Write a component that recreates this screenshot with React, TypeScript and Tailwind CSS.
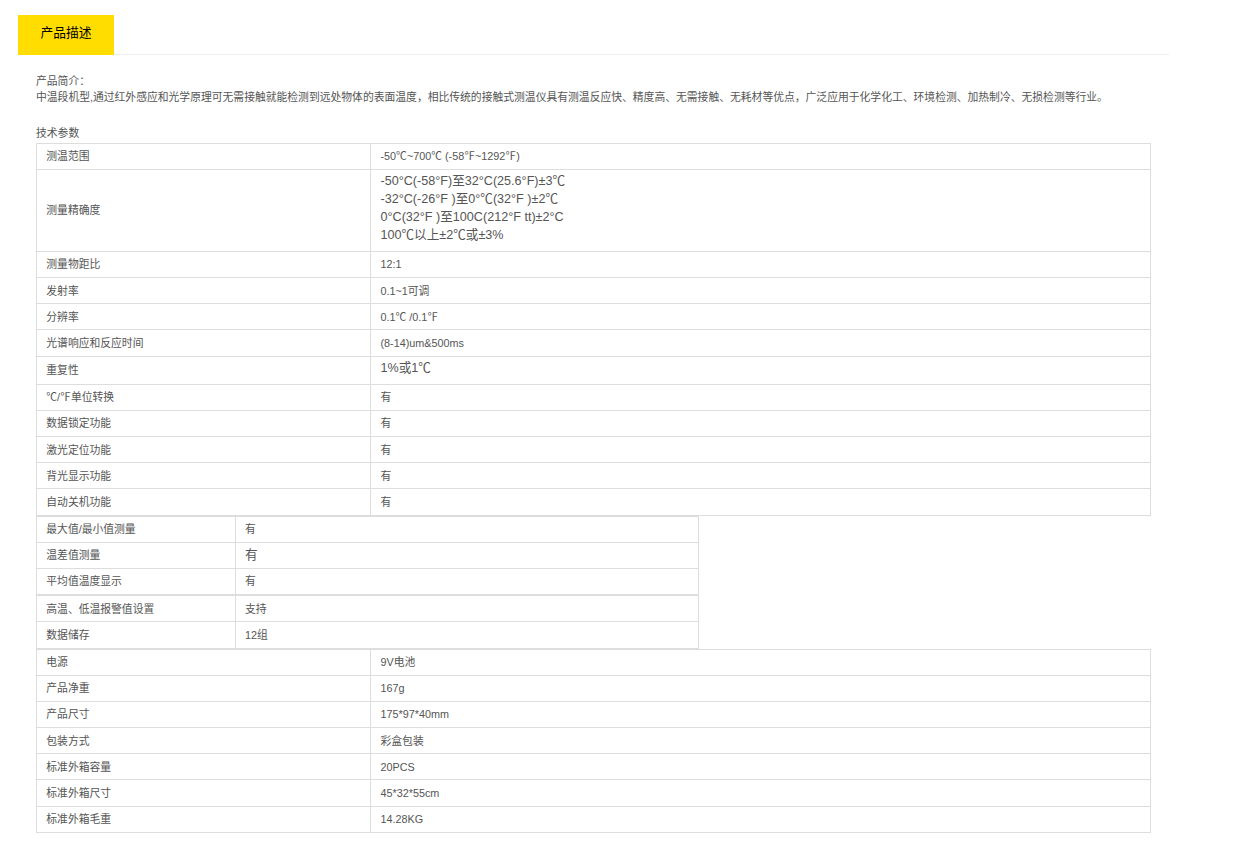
type Row = { label: string; value: string[]; h: string; large?: boolean; lift?: boolean; low?: boolean };

const H25 = 'h-[26px]';
const H26 = 'h-[27px]';

const mainRows: Row[] = [
  { label: '测温范围', value: ['-50℃~700℃ (-58℉~1292℉)'], h: H25 },
  {
    label: '测量精确度',
    value: [
      '-50°C(-58°F)至32°C(25.6°F)±3℃',
      '-32°C(-26°F )至0°℃(32°F )±2℃',
      '0°C(32°F )至100C(212°F tt)±2°C',
      '100℃以上±2℃或±3%',
    ],
    h: 'h-[82px]',
    large: true,
    lift: true,
  },
  { label: '测量物距比', value: ['12:1'], h: H25 },
  { label: '发射率', value: ['0.1~1可调'], h: H25, low: true },
  { label: '分辨率', value: ['0.1℃ /0.1℉'], h: H25, low: true },
  { label: '光谱响应和反应时间', value: ['(8-14)um&500ms'], h: H26, low: true },
  { label: '重复性', value: ['1%或1℃'], h: 'h-[28px]', large: true, lift: true },
  { label: '℃/℉单位转换', value: ['有'], h: H25 },
  { label: '数据锁定功能', value: ['有'], h: H25 },
  { label: '激光定位功能', value: ['有'], h: H25, low: true },
  { label: '背光显示功能', value: ['有'], h: H25, low: true },
  { label: '自动关机功能', value: ['有'], h: H26, low: true },
];

const measureRows: Row[] = [
  { label: '最大值/最小值测量', value: ['有'], h: H25 },
  { label: '温差值测量', value: ['有'], h: H25, large: true },
  { label: '平均值温度显示', value: ['有'], h: H25 },
];

const alarmRows: Row[] = [
  { label: '高温、低温报警值设置', value: ['支持'], h: H25, low: true },
  { label: '数据储存', value: ['12组'], h: H26, low: true },
];

const packRows: Row[] = [
  { label: '电源', value: ['9V电池'], h: H25 },
  { label: '产品净重', value: ['167g'], h: H25 },
  { label: '产品尺寸', value: ['175*97*40mm'], h: H25 },
  { label: '包装方式', value: ['彩盒包装'], h: H25, low: true },
  { label: '标准外箱容量', value: ['20PCS'], h: H25, low: true },
  { label: '标准外箱尺寸', value: ['45*32*55cm'], h: H26, low: true },
  { label: '标准外箱毛重', value: ['14.28KG'], h: H25 },
];

function SpecTable({ rows, narrow, last }: { rows: Row[]; narrow?: boolean; last?: boolean }) {
  return (
    <div
      className={`border-x border-[#ddd] ${narrow ? 'w-[663px]' : 'w-[1115px]'} ${last ? 'border-b' : ''}`}
    >
      {rows.map((row) => (
        <div key={row.label} className={`flex border-t border-[#ddd] ${row.h}`}>
          <div
            className={`flex shrink-0 items-center border-r border-[#ddd] pl-[9.3px] ${row.low ? '' : 'pb-[2px]'} ${narrow ? 'w-[199px]' : 'w-[334px]'}`}
          >
            {row.label}
          </div>
          <div
            className={`flex flex-1 flex-col justify-center ${narrow ? 'pl-[9px]' : 'pl-[9.5px]'} ${row.large ? 'text-[12.6px] leading-[18px]' : ''} ${row.lift ? 'pb-[5px]' : row.low ? '' : 'pb-[2px]'}`}
          >
            {row.value.map((line) => (
              <div key={line}>{line}</div>
            ))}
          </div>
        </div>
      ))}
    </div>
  );
}

export default function App() {
  return (
    <main className="h-[844px] w-[1240px] overflow-hidden bg-white pt-[15px] pl-[18px] font-['Liberation_Sans','Noto_Sans_CJK_SC',sans-serif] text-[10.8px] leading-[16px] whitespace-nowrap text-[#555]">
      <div className="flex h-[40px] w-[1151px] border-b border-[#eee]">
        <div className="h-[40px] w-[96px] bg-[#fd0] text-center text-[12.75px] leading-[36px] text-black">
          产品描述
        </div>
      </div>
      <section className="pt-[18px] pl-[18px]">
        <p>产品简介：</p>
        <p>
          中温段机型,通过红外感应和光学原理可无需接触就能检测到远处物体的表面温度，相比传统的接触式测温仪具有测温反应快、精度高、无需接触、无耗材等优点，广泛应用于化学化工、环境检测、加热制冷、无损检测等行业。
        </p>
        <p className="mt-[20px] h-[18px]">技术参数</p>
        <SpecTable rows={mainRows} />
        <div className="w-[1115px] border-t border-[#ddd]" />
        <SpecTable rows={measureRows} narrow />
        <div className="w-[663px] border-t border-[#ddd]" />
        <SpecTable rows={alarmRows} narrow />
        <div className="w-[663px] border-t border-[#ddd]" />
        <SpecTable rows={packRows} last />
      </section>
    </main>
  );
}
